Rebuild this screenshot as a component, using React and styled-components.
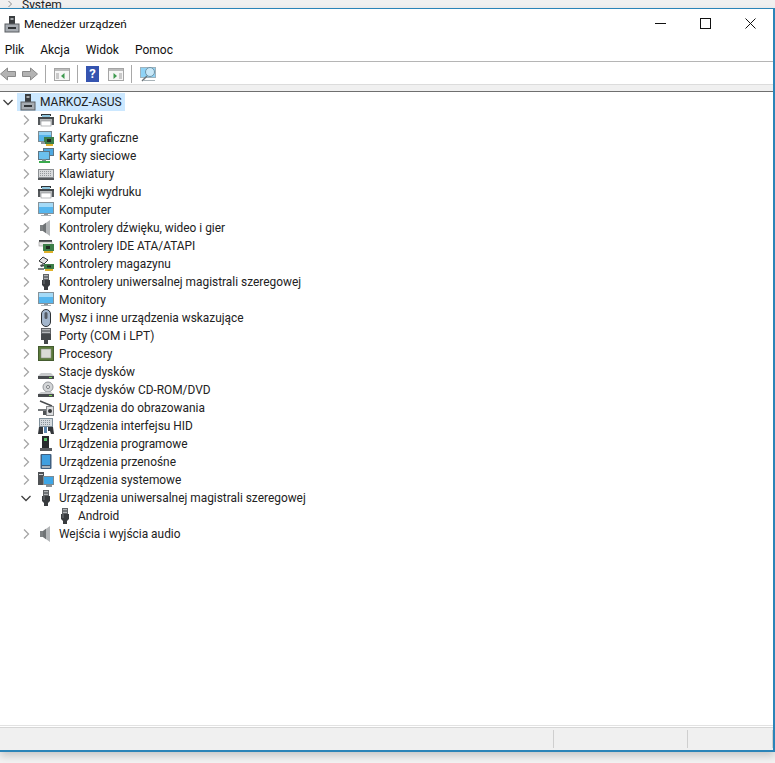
import React from "react";
import styled, { createGlobalStyle } from "styled-components";

const GlobalStyle = createGlobalStyle`
  html, body {
    margin: 0;
    padding: 0;
    background: #f2f2f2;
  }
  body {
    font-family: Roboto, "Open Sans", sans-serif;
    font-size: 12px;
    color: #222;
  }
`;

// device icons, all drawn in a 16x16 box
const icons = {
  computer: (
    <>
      <rect x="5" y="0" width="6" height="8" fill="#3a3d40" />
      <rect x="6.500" y="2" width="3" height="2" fill="#a4a8ab" />
      <rect x="1" y="8" width="14" height="8" fill="#a7acb2" stroke="#5a5e62" strokeWidth="1" />
      <rect x="4" y="11" width="8" height="2" fill="#303336" />
    </>
  ),
  printer: (
    <>
      <rect x="3" y="2" width="10" height="2" fill="#30363a" />
      <rect x="4" y="3" width="8" height="2" fill="#8ec4dc" />
      <rect x="0" y="5" width="16" height="8" fill="#b9bcbe" />
      <rect x="0" y="5" width="16" height="2" fill="#44484b" />
      <rect x="0" y="7" width="2" height="6" fill="#55595c" />
      <rect x="14" y="7" width="2" height="6" fill="#55595c" />
      <rect x="3" y="9" width="10" height="5" fill="#fff" stroke="#8a8d90" strokeWidth="0.6" />
    </>
  ),
  display: (
    <>
      <rect x="0.500" y="1.500" width="13" height="10" fill="#56b4ea" stroke="#7b8a92" />
      <rect x="1" y="2" width="12" height="3" fill="#93d2f3" />
      <rect x="6" y="7" width="10" height="7" fill="#3c7e48" />
      <rect x="9" y="9" width="4" height="3" fill="#1f2a22" />
      <rect x="8" y="14" width="7" height="2" fill="#dfb12a" />
      <rect x="3" y="12" width="4" height="2" fill="#8b979d" />
    </>
  ),
  network: (
    <>
      <rect x="5.500" y="0.500" width="10" height="7" fill="#4ea9e2" stroke="#5c7584" />
      <rect x="0.500" y="3.500" width="11" height="8" fill="#6bc0ee" stroke="#5c7584" />
      <rect x="4" y="11" width="4" height="2" fill="#7a8a91" />
      <rect x="1" y="13" width="11" height="2" fill="#3aaa4c" />
    </>
  ),
  keyboard: (
    <>
      <rect x="0.500" y="3.500" width="15" height="8" fill="#d8dadc" stroke="#8b8f92" />
      <path d="M2 5.500h12M2 7.500h12M2 9.500h12" stroke="#94989b" strokeDasharray="1 1" />
      <rect x="0" y="12" width="16" height="2" fill="#55585b" />
    </>
  ),
  monitor: (
    <>
      <rect x="0.500" y="0.500" width="15" height="11" fill="#55b6ee" stroke="#85929a" />
      <rect x="1" y="1" width="14" height="4" fill="#a4daf7" />
      <rect x="6" y="12" width="4" height="1" fill="#8a9399" />
      <rect x="3" y="13" width="10" height="1" fill="#aab2b7" />
    </>
  ),
  speaker: (
    <>
      <path d="M2 5h3l7-5v16l-7-5H2z" fill="#b4b7b9" />
      <path d="M2 5h3v6H2z" fill="#7d8183" />
      <path d="M5 5l3-2.200v10.400L5 11z" fill="#6f7375" />
    </>
  ),
  ide: (
    <>
      <rect x="1" y="2" width="13" height="2" fill="#3f4245" />
      <rect x="1" y="4" width="13" height="4" fill="#e6e6e6" stroke="#999" strokeWidth="0.6" />
      <rect x="5" y="6" width="11" height="7" fill="#3c7e48" />
      <rect x="8" y="8" width="4" height="3" fill="#1f2a22" />
      <rect x="6" y="13" width="9" height="2" fill="#dfb12a" />
    </>
  ),
  storage: (
    <>
      <path d="M1 5l4-4 5 3-4 4z" fill="#e2e2e2" stroke="#33373a" />
      <path d="M2 9l3-1 2 2-4 1z" fill="#44484b" />
      <rect x="6" y="8" width="10" height="5" fill="#3c7e48" />
      <rect x="9" y="9.500" width="4" height="2" fill="#1f2a22" />
      <rect x="0" y="12" width="6" height="2" fill="#7f8386" />
      <rect x="7" y="13" width="8" height="2" fill="#dfb12a" />
    </>
  ),
  usb: (
    <>
      <rect x="5.500" y="0.500" width="5" height="5" fill="#b2b5b7" stroke="#606366" />
      <path d="M7 2v2M9 2v2" stroke="#33363a" />
      <path d="M4 6h8v5l-2 2v3H6v-3l-2-2z" fill="#383b3e" />
      <rect x="5" y="6" width="2" height="4" fill="#55595c" />
    </>
  ),
  mouse: (
    <>
      <rect x="3.500" y="-0.500" width="9" height="17" rx="4.500" fill="#a3b6cc" stroke="#2e3236" />
      <rect x="6.500" y="2" width="3" height="7" rx="1.500" fill="#565d66" />
    </>
  ),
  port: (
    <>
      <rect x="3.500" y="0.500" width="9" height="5" fill="#b6b8ba" stroke="#606366" />
      <path d="M5 2v2M7 2v2M9 2v2M11 2v2" stroke="#3f4245" />
      <rect x="3" y="6" width="10" height="6" fill="#45484a" />
      <rect x="6" y="12" width="4" height="4" fill="#45484a" />
    </>
  ),
  cpu: (
    <>
      <rect x="0" y="0" width="16" height="15" fill="#5a7a3a" />
      <rect x="0.500" y="0.500" width="15" height="14" fill="none" stroke="#2f3d24" strokeDasharray="1 1" />
      <rect x="3" y="3" width="10" height="9" fill="#dadcd6" stroke="#8c8f88" strokeWidth="0.6" />
    </>
  ),
  disk: (
    <>
      <path d="M3 9h10l3 3v3H0v-3z" fill="#c8cacc" />
      <rect x="0" y="12" width="16" height="3" fill="#484b4e" />
      <rect x="11" y="13" width="3" height="1" fill="#7ed957" />
    </>
  ),
  cdrom: (
    <>
      <circle cx="10" cy="5" r="5" fill="#d4d6d8" stroke="#93969a" />
      <circle cx="10" cy="5" r="1.500" fill="#fff" stroke="#7a7d80" />
      <path d="M3 10h10l3 2v3H0v-3z" fill="#c8cacc" />
      <rect x="0" y="12" width="16" height="3" fill="#484b4e" />
      <rect x="11" y="13" width="3" height="1" fill="#7ed957" />
    </>
  ),
  imaging: (
    <>
      <path d="M2 1l12 5" stroke="#4a4d50" strokeWidth="1.500" />
      <rect x="8.500" y="6.500" width="7" height="9" fill="#dcdee0" stroke="#85888b" />
      <circle cx="12" cy="11" r="2" fill="#34373a" />
      <rect x="0" y="9" width="8" height="2" fill="#74787b" />
      <rect x="5" y="11" width="3" height="4" fill="#4f5255" />
    </>
  ),
  hid: (
    <>
      <rect x="1.500" y="0.500" width="13" height="8" fill="#d4dade" stroke="#7f8f9a" />
      <path d="M3 2.500h10M3 4.500h10M3 6.500h10" stroke="#8b959b" strokeDasharray="1 1" />
      <path d="M0 16l1-7h4v7zM10 9h5l1 7h-3l-1-3h-2z" fill="#33363a" />
      <rect x="6" y="9" width="3" height="6" fill="#5b85ad" />
    </>
  ),
  program: (
    <>
      <rect x="4" y="0" width="7" height="12" fill="#26292b" />
      <rect x="6" y="2" width="3" height="3" fill="#59c36a" />
      <rect x="2" y="12" width="12" height="3" fill="#5a5d60" />
    </>
  ),
  portable: (
    <>
      <rect x="2.500" y="0" width="11" height="15" rx="1" fill="#3f5f80" />
      <rect x="4" y="1" width="8" height="10" fill="#3f9fe0" />
      <rect x="4" y="12" width="8" height="2" fill="#a8b4bd" />
    </>
  ),
  system: (
    <>
      <rect x="0" y="0" width="6" height="13" fill="#4f5255" />
      <rect x="1" y="2" width="4" height="1" fill="#cfd1d3" />
      <rect x="5.500" y="4.500" width="10" height="8" fill="#3ea6e6" stroke="#7d8a91" />
      <rect x="8" y="13" width="6" height="2" fill="#8a9399" />
    </>
  ),
};

const categories = [
  ["Drukarki", "printer"],
  ["Karty graficzne", "display"],
  ["Karty sieciowe", "network"],
  ["Klawiatury", "keyboard"],
  ["Kolejki wydruku", "printer"],
  ["Komputer", "monitor"],
  ["Kontrolery dźwięku, wideo i gier", "speaker"],
  ["Kontrolery IDE ATA/ATAPI", "ide"],
  ["Kontrolery magazynu", "storage"],
  ["Kontrolery uniwersalnej magistrali szeregowej", "usb"],
  ["Monitory", "monitor"],
  ["Mysz i inne urządzenia wskazujące", "mouse"],
  ["Porty (COM i LPT)", "port"],
  ["Procesory", "cpu"],
  ["Stacje dysków", "disk"],
  ["Stacje dysków CD-ROM/DVD", "cdrom"],
  ["Urządzenia do obrazowania", "imaging"],
  ["Urządzenia interfejsu HID", "hid"],
  ["Urządzenia programowe", "program"],
  ["Urządzenia przenośne", "portable"],
  ["Urządzenia systemowe", "system"],
];

const DeviceIcon = ({ kind }) => (
  <IconBox viewBox="0 0 16 16" width="16" height="16">
    {icons[kind]}
  </IconBox>
);

const Chevron = ({ open }) => (
  <ChevronBox viewBox="0 0 12 12" width="12" height="12">
    {open ? (
      <path d="M1.500 4l4.500 4.500L10.500 4" fill="none" stroke="#404040" strokeWidth="1.300" />
    ) : (
      <path d="M4 1.500L8.500 6 4 10.500" fill="none" stroke="#a6a6a6" strokeWidth="1.300" />
    )}
  </ChevronBox>
);

const TreeRow = ({ label, kind, open, leaf }) => (
  <Row $indent={leaf ? 39 : 20}>
    <ChevronSlot>{leaf ? null : <Chevron open={open} />}</ChevronSlot>
    <DeviceIcon kind={kind} />
    <RowLabel>{label}</RowLabel>
  </Row>
);

export default function App() {
  return (
    <Page>
      <GlobalStyle />
      <BehindWindow>
        <svg width="5" height="8" viewBox="0 0 5 8">
          <path d="M0.500 1l3 3-3 3" fill="none" stroke="#8a8a8a" />
        </svg>
        <BehindLabel>System</BehindLabel>
      </BehindWindow>
      <Window>
        <TitleBar>
          <DeviceIcon kind="computer" />
          <Title>Menedżer urządzeń</Title>
          <WindowButtons>
            <WindowButton>
              <svg width="11" height="11" viewBox="0 0 11 11">
                <path d="M0 5.500h11" stroke="#111" />
              </svg>
            </WindowButton>
            <WindowButton>
              <svg width="11" height="11" viewBox="0 0 11 11">
                <rect x="0.500" y="0.500" width="10" height="10" fill="none" stroke="#111" />
              </svg>
            </WindowButton>
            <WindowButton>
              <svg width="11" height="11" viewBox="0 0 11 11">
                <path d="M0.500 0.500l10 10M10.500 0.500l-10 10" stroke="#111" />
              </svg>
            </WindowButton>
          </WindowButtons>
        </TitleBar>
        <MenuBar>
          <MenuItem>Plik</MenuItem>
          <MenuItem>Akcja</MenuItem>
          <MenuItem>Widok</MenuItem>
          <MenuItem>Pomoc</MenuItem>
        </MenuBar>
        <Toolbar>
          <ToolButton>
            <svg width="16" height="16" viewBox="0 0 16 16">
              <path d="M0.500 8l7-6v3.500h8v5h-8V14z" fill="#b3b3b3" stroke="#8a8a8a" />
            </svg>
          </ToolButton>
          <ToolButton>
            <svg width="16" height="16" viewBox="0 0 16 16">
              <path d="M15.500 8l-7-6v3.500h-8v5h8V14z" fill="#b3b3b3" stroke="#8a8a8a" />
            </svg>
          </ToolButton>
          <ToolSeparator />
          <ToolButton>
            <svg width="16" height="16" viewBox="0 0 16 16">
              <rect x="0.500" y="2.500" width="15" height="12" fill="#f6f6f6" stroke="#a5a5a5" />
              <rect x="1" y="3" width="14" height="2" fill="#bcbcbc" />
              <rect x="2" y="7" width="3" height="6" fill="#c9c9c9" />
              <path d="M10.500 7v6L7 10z" fill="#3e9a4f" />
            </svg>
          </ToolButton>
          <ToolSeparator />
          <ToolButton>
            <HelpBadge>?</HelpBadge>
          </ToolButton>
          <ToolButton>
            <svg width="16" height="16" viewBox="0 0 16 16">
              <rect x="0.500" y="2.500" width="15" height="12" fill="#f6f6f6" stroke="#a5a5a5" />
              <rect x="1" y="3" width="14" height="2" fill="#bcbcbc" />
              <rect x="11" y="7" width="3" height="6" fill="#c9c9c9" />
              <path d="M5.500 7v6L9 10z" fill="#3e9a4f" />
            </svg>
          </ToolButton>
          <ToolSeparator />
          <ToolButton>
            <svg width="16" height="16" viewBox="0 0 16 16">
              <rect x="0.500" y="1.500" width="15" height="10" fill="#8fd3f6" stroke="#9fb3bd" />
              <circle cx="10" cy="6" r="4.500" fill="#c8e8f8" stroke="#6f93a6" />
              <path d="M7 10l-5 5" stroke="#6d7478" strokeWidth="1.400" />
              <rect x="3" y="14" width="12" height="1" fill="#a9b3b8" />
            </svg>
          </ToolButton>
        </Toolbar>
        <GrayStrip />
        <Tree>
          <Row $indent={2}>
            <ChevronSlot $root>
              <Chevron open />
            </ChevronSlot>
            <RootLabel>
              <DeviceIcon kind="computer" />
              <RootName>MARKOZ-ASUS</RootName>
            </RootLabel>
          </Row>
          {categories.map(([label, kind]) => (
            <TreeRow key={label} label={label} kind={kind} />
          ))}
          <TreeRow label="Urządzenia uniwersalnej magistrali szeregowej" kind="usb" open />
          <TreeRow label="Android" kind="usb" leaf />
          <TreeRow label="Wejścia i wyjścia audio" kind="speaker" />
        </Tree>
        <StatusBar>
          <StatusCell $grow />
          <StatusCell $width="133px" />
          <StatusCell $width="84px" />
        </StatusBar>
      </Window>
    </Page>
  );
}

const Page = styled.div`
  width: 775px;
  height: 763px;
  overflow: hidden;
  background: #f3f3f3;
`;

const BehindWindow = styled.div`
  height: 8px;
  padding-left: 8px;
  display: flex;
  overflow: hidden;
  background: #f0f0f0;
`;

const BehindLabel = styled.div`
  margin-left: 9px;
  line-height: 10px;
  color: #222;
`;

const Window = styled.div`
  width: 773px;
  height: 741px;
  display: flex;
  flex-direction: column;
  background: #fff;
  border: solid #2b84b8;
  border-width: 1px 2px 2px 0;
  box-shadow: 0 4px 8px rgba(0, 0, 0, 0.18);
`;

const TitleBar = styled.div`
  height: 30px;
  display: flex;
  align-items: center;
  padding-left: 4px;
`;

const Title = styled.div`
  margin-left: 4px;
  font-size: 11.800px;
  color: #111;
`;

const WindowButtons = styled.div`
  margin-left: auto;
  display: flex;
`;

const WindowButton = styled.div`
  width: 45px;
  height: 28px;
  padding-bottom: 2px;
  display: flex;
  align-items: center;
  justify-content: center;
`;

const MenuBar = styled.div`
  height: 22px;
  display: flex;
  align-items: center;
  border-bottom: 1px solid #b5b5b5;
  padding-left: 4.700px;
  gap: 16px;
`;

const MenuItem = styled.div`
  color: #111;
`;

const Toolbar = styled.div`
  height: 21px;
  padding-top: 1px;
  display: flex;
  align-items: center;
  border-bottom: 1px solid #dcdcdc;
`;

const ToolButton = styled.div`
  width: 16px;
  height: 16px;
  margin-right: 6px;
  flex: none;
  display: flex;
  align-items: center;
`;

const HelpBadge = styled.div`
  width: 13px;
  height: 16px;
  background: #3554b0;
  color: #fff;
  font-size: 13px;
  font-weight: 700;
  line-height: 16px;
  text-align: center;
`;

const ToolSeparator = styled.div`
  width: 1px;
  height: 18px;
  background: #a8a8a8;
  margin: 0 8px 0 1px;
`;

const GrayStrip = styled.div`
  height: 6px;
  background: #f0f0f0;
  border-bottom: 1px solid #6f6f6f;
`;

const Tree = styled.div`
  flex: 1;
  padding-top: 1px;
`;

const Row = styled.div`
  height: 18px;
  display: flex;
  align-items: center;
  padding-left: ${(p) => p.$indent}px;
`;

const ChevronSlot = styled.div`
  width: ${(p) => (p.$root ? 15 : 18)}px;
  height: 18px;
  flex: none;
  display: flex;
  align-items: center;
`;

const ChevronBox = styled.svg`
  display: block;
`;

const IconBox = styled.svg`
  flex: none;
  display: block;
  overflow: visible;
`;

const RowLabel = styled.div`
  margin-left: 5px;
  font-size: 11.900px;
  white-space: nowrap;
`;

const RootLabel = styled.div`
  display: flex;
  align-items: center;
  height: 18px;
  padding: 0 3px;
  background: #cce8ff;
`;

const RootName = styled.div`
  margin-left: 4px;
  white-space: nowrap;
`;

const StatusBar = styled.div`
  height: 18px;
  display: flex;
  background: #f0f0f0;
  border-top: 1px solid #d6d6d6;
  box-shadow: 0 -1px 0 #fff, 0 -2px 0 #e2e2e2;
  padding: 2px 0;
`;

const StatusCell = styled.div`
  flex: ${(p) => (p.$grow ? 1 : "none")};
  width: ${(p) => p.$width || "auto"};
  border-right: 1px solid #cfcfcf;
`;
